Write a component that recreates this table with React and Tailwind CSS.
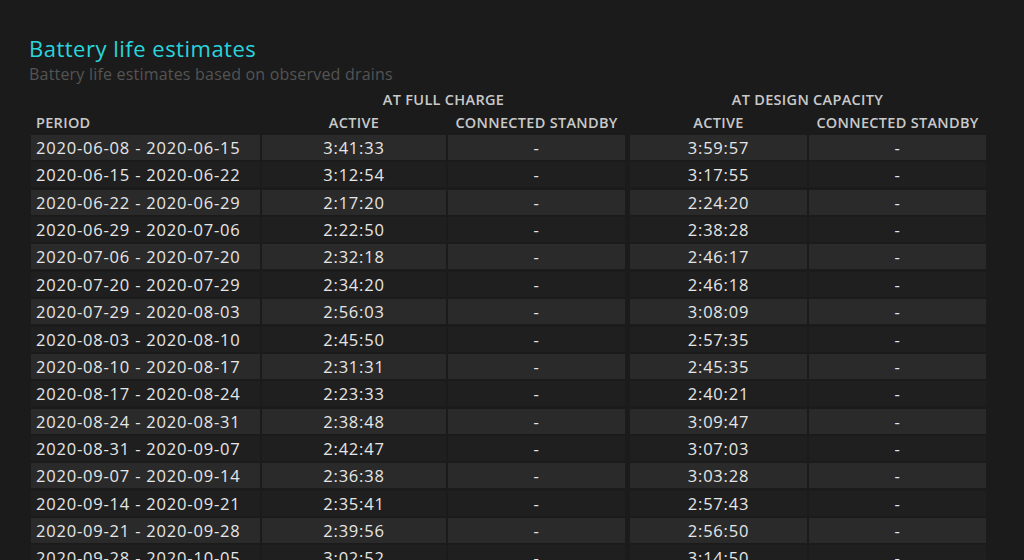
import React from "react";

const rows = [
  ["2020-06-08 - 2020-06-15", "3:41:33", "3:59:57"],
  ["2020-06-15 - 2020-06-22", "3:12:54", "3:17:55"],
  ["2020-06-22 - 2020-06-29", "2:17:20", "2:24:20"],
  ["2020-06-29 - 2020-07-06", "2:22:50", "2:38:28"],
  ["2020-07-06 - 2020-07-20", "2:32:18", "2:46:17"],
  ["2020-07-20 - 2020-07-29", "2:34:20", "2:46:18"],
  ["2020-07-29 - 2020-08-03", "2:56:03", "3:08:09"],
  ["2020-08-03 - 2020-08-10", "2:45:50", "2:57:35"],
  ["2020-08-10 - 2020-08-17", "2:31:31", "2:45:35"],
  ["2020-08-17 - 2020-08-24", "2:23:33", "2:40:21"],
  ["2020-08-24 - 2020-08-31", "2:38:48", "3:09:47"],
  ["2020-08-31 - 2020-09-07", "2:42:47", "3:07:03"],
  ["2020-09-07 - 2020-09-14", "2:36:38", "3:03:28"],
  ["2020-09-14 - 2020-09-21", "2:35:41", "2:57:43"],
  ["2020-09-21 - 2020-09-28", "2:39:56", "2:56:50"],
  ["2020-09-28 - 2020-10-05", "3:02:52", "3:14:50"],
];

export default function App() {
  return (
    <div
      className="w-[1024px] h-[560px] overflow-hidden bg-[#1b1b1b] text-[#e6e6e6]"
      style={{ fontFamily: '"Open Sans", "Noto Sans", sans-serif' }}
    >
      <div className="pl-[29px] pt-[34px]">
        <h1 className="text-[22px] leading-[28px] tracking-[0.5px] text-[#2ad4dc]">Battery life estimates</h1>
        <p className="text-[16px] leading-[22px] tracking-[0.2px] text-[#545454] mt-[1px]">
          Battery life estimates based on observed drains
        </p>
      </div>
      <div className="pl-[31px] mt-[4px]">
        <div className="flex h-[22px] items-center text-[14.5px] tracking-[0.3px] font-semibold text-[#c9c9c9]">
          <div className="w-[231px]" />
          <div className="w-[363px] text-center">AT FULL CHARGE</div>
          <div className="w-[5px]" />
          <div className="w-[355px] text-center">AT DESIGN CAPACITY</div>
        </div>
        <div className="flex h-[23px] items-center text-[14.5px] tracking-[0.3px] font-semibold text-[#c9c9c9]">
          <div className="w-[229px] pl-[5px]">PERIOD</div>
          <div className="w-[184px] ml-[2px] text-center">ACTIVE</div>
          <div className="w-[177px] ml-[2px] text-center">CONNECTED STANDBY</div>
          <div className="w-[177px] ml-[5px] text-center">ACTIVE</div>
          <div className="w-[177px] ml-[2px] text-center">CONNECTED STANDBY</div>
        </div>
        <div className="mt-[1px] flex flex-col gap-[2.36px]">
          {rows.map((r, i) => {
            const bg = i % 2 === 0 ? "bg-[#2a2a2a]" : "bg-[#1f1f1f]";
            return (
              <div key={i} className="flex h-[25px] text-[16.5px] leading-[25px] tracking-[0.8px]">
                <div className={`w-[229px] pl-[5px] ${bg}`}>{r[0]}</div>
                <div className={`w-[184px] ml-[2px] text-center ${bg}`}>{r[1]}</div>
                <div className={`w-[177px] ml-[2px] text-center ${bg}`}>-</div>
                <div className={`w-[177px] ml-[5px] text-center ${bg}`}>{r[2]}</div>
                <div className={`w-[177px] ml-[2px] text-center ${bg}`}>-</div>
              </div>
            );
          })}
        </div>
      </div>
    </div>
  );
}
